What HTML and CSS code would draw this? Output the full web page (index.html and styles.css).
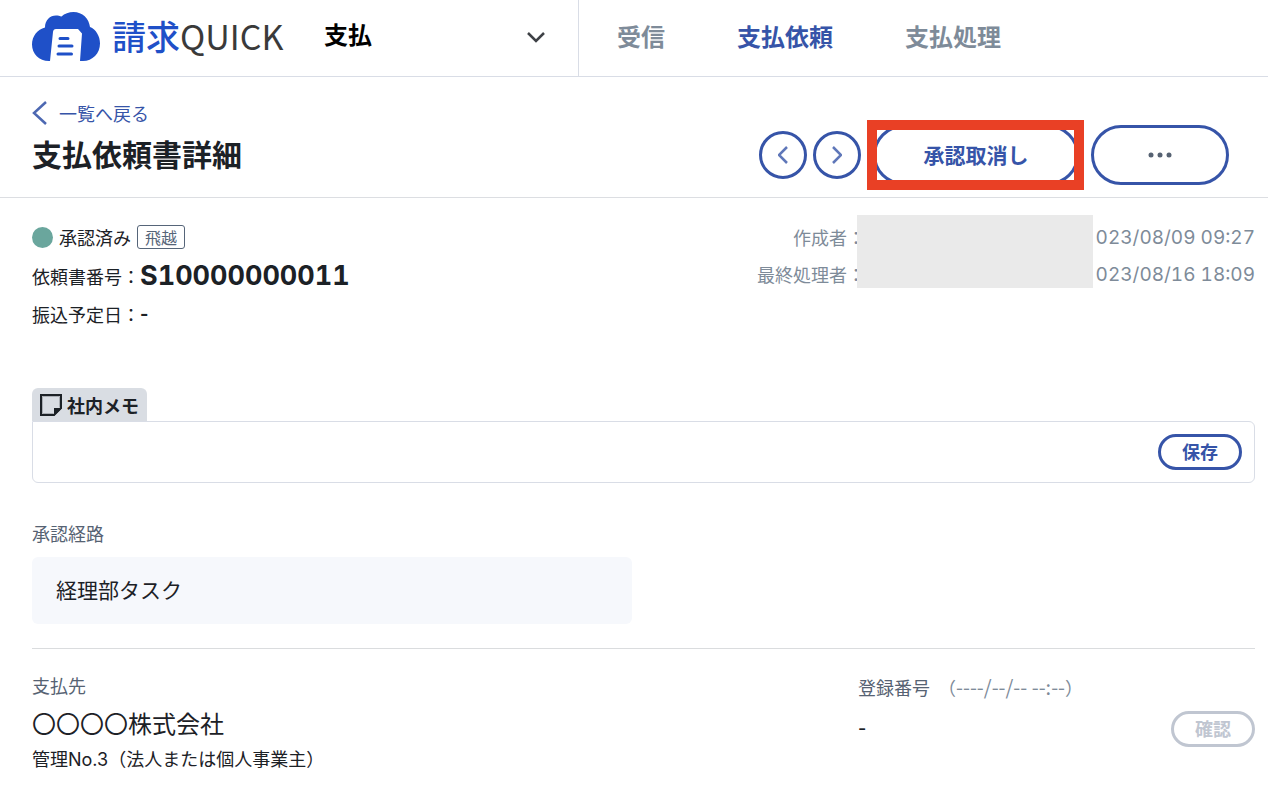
FILE: index.html
```html
<!DOCTYPE html>
<html lang="ja">
<head>
    <meta charset="UTF-8">
    <meta name="viewport" content="width=device-width, initial-scale=1.0">
    <title>支払依頼書詳細</title>
    <link rel="stylesheet" href="styles.css">
</head>
<body>
    <!-- Header -->
    <header class="header">
        <div class="header-left">
            <a href="#" class="logo">
                <svg class="logo-mark" viewBox="0 0 68 49" aria-hidden="true">
                    <path fill="#1f50c8" d="M17 49C7 49 0 41.500 0 32.500C0 24 5.500 17.500 13 15.500C13 8 18 3.500 24 3.500C26 3.500 28 4 29.500 4.500C32.500 1.500 37 0 41.500 0C50.500 0 57 6.500 58 15C64 17.500 68 24 68 31.500C68 41.500 60.500 49 51 49Z"/>
                    <path fill="#fff" d="M18 49L21 20Q21.300 17 24 17H46L50 21.500L48 49Z"/>
                    <path fill="none" stroke="#1f50c8" stroke-width="3" stroke-linecap="round" d="M28 26.500H36M27 34H40M26 42H39.500"/>
                </svg>
                <span class="logo-text"><span class="logo-kanji">請求</span>QUICK</span>
            </a>
            <div class="menu">
                <select class="menu-select" aria-label="メニュー">
                    <option>支払</option>
                </select>
                <svg class="menu-arrow" viewBox="0 0 20 12" aria-hidden="true">
                    <path d="M2 2L10 10L18 2"/>
                </svg>
            </div>
        </div>
        <nav class="nav">
            <a href="#" class="nav-link">受信</a>
            <a href="#" class="nav-link active">支払依頼</a>
            <a href="#" class="nav-link">支払処理</a>
        </nav>
    </header>

    <!-- Title bar -->
    <div class="title-bar">
        <div>
            <a href="#" class="back">
                <svg viewBox="0 0 15 24" aria-hidden="true"><path d="M14 1L2 12L14 23"/></svg>
                一覧へ戻る
            </a>
            <h1 class="title">支払依頼書詳細</h1>
        </div>
        <div class="actions">
            <div class="pager">
                <button class="round-button" aria-label="前へ">
                    <svg viewBox="0 0 10 18" aria-hidden="true"><path d="M9 1L1 9L9 17"/></svg>
                </button>
                <button class="round-button" aria-label="次へ">
                    <svg viewBox="0 0 10 18" aria-hidden="true"><path d="M1 1L9 9L1 17"/></svg>
                </button>
            </div>
            <div class="highlight">
                <button class="button button-large button-cancel">承認取消し</button>
            </div>
            <button class="button button-large button-more" aria-label="その他">
                <svg viewBox="0 0 24 6" aria-hidden="true">
                    <circle cx="3" cy="3" r="2.500"/><circle cx="12" cy="3" r="2.500"/><circle cx="21" cy="3" r="2.500"/>
                </svg>
            </button>
        </div>
    </div>

    <main class="content">
        <!-- Summary -->
        <section class="summary">
            <div class="summary-left">
                <p class="status"><span class="dot"></span>承認済み<span class="tag">飛越</span></p>
                <p class="summary-row">依頼書番号：<strong class="number">S10000000011</strong></p>
                <p class="summary-row">振込予定日：<strong>-</strong></p>
            </div>
            <div class="history">
                <p class="history-row"><span class="history-label">作成者：</span><span class="date">023/08/09 09:27</span></p>
                <p class="history-row"><span class="history-label">最終処理者：</span><span class="date">023/08/16 18:09</span></p>
                <div class="mask"></div>
            </div>
        </section>

        <!-- Memo -->
        <section class="memo">
            <label class="memo-tab" for="memo">
                <svg viewBox="0 0 22 22" aria-hidden="true">
                    <path fill="#d9dde3" stroke="#1c2126" stroke-width="2" d="M1 1H21V14L14 21H1Z"/>
                    <path fill="none" stroke="#a9adb3" d="M13.500 19.500H2.500V2.500H19.500V13.500"/>
                    <path fill="#1c2126" d="M14 14H22L14 22Z"/>
                </svg>
                社内メモ
            </label>
            <div class="memo-box">
                <textarea id="memo" class="memo-input" rows="1"></textarea>
                <button class="button button-small">保存</button>
            </div>
        </section>

        <!-- Approval route -->
        <section class="route">
            <h2 class="label">承認経路</h2>
            <div class="route-card">経理部タスク</div>
        </section>

        <!-- Payee -->
        <section class="payee">
            <div class="payee-main">
                <h2 class="label">支払先</h2>
                <p class="payee-name">〇〇〇〇株式会社</p>
                <p class="payee-note">管理No.3（法人または個人事業主）</p>
            </div>
            <div class="registration">
                <h2 class="label registration-label">登録番号 <span class="checked-at">（<span class="checked-date">----/--/-- --:--</span>）</span></h2>
                <div class="registration-row">
                    <span class="registration-number">-</span>
                    <button class="button button-small" disabled>確認</button>
                </div>
            </div>
        </section>
    </main>
</body>
</html>
```

FILE: styles.css
```css
* {
    margin: 0;
    padding: 0;
    box-sizing: border-box;
}

body {
    font-family: "Noto Sans CJK JP", sans-serif;
    font-size: 18px;
    line-height: 24px;
    color: #1c2126;
    background: #fff;
}

a {
    text-decoration: none;
}

svg {
    display: block;
    flex-shrink: 0;
}

button,
select,
textarea {
    font-family: inherit;
}

/* Header */
.header {
    display: flex;
    height: 77px;
    border-bottom: 1px solid #d9dde6;
}

.header-left {
    display: flex;
    align-items: center;
    width: 579px;
    padding: 0 32px 3px;
    border-right: 1px solid #d9dde6;
}

.logo {
    display: flex;
    align-items: center;
    gap: 12px;
    width: 292px;
    flex-shrink: 0;
}

.logo-mark {
    width: 68px;
    height: 49px;
}

.logo-text {
    padding-bottom: 2px;
    font-size: 34px;
    line-height: 40px;
    color: #3a3a3a;
    white-space: nowrap;
}

.logo-kanji {
    font-weight: 500;
    color: #1f50c8;
}

.menu {
    position: relative;
    flex: 1;
    padding-bottom: 6px;
}

.menu-select {
    appearance: none;
    width: 100%;
    border: none;
    background: none;
    font-size: 24px;
    font-weight: 700;
    line-height: 36px;
    color: #000;
}

.menu-arrow {
    position: absolute;
    right: 0;
    top: 15px;
    width: 20px;
    height: 12px;
    fill: none;
    stroke: #3e4146;
    stroke-width: 2.5;
    pointer-events: none;
}

.nav {
    display: flex;
    align-items: center;
    gap: 72px;
    padding: 0 38px 4px;
}

.nav-link {
    font-size: 24px;
    font-weight: 700;
    color: #7e8b99;
    white-space: nowrap;
}

.nav-link.active {
    color: #3654a8;
}

/* Title bar */
.title-bar {
    display: flex;
    justify-content: space-between;
    padding: 24px 39px 12px 32px;
    border-bottom: 1px solid #dcdee2;
}

.back {
    display: flex;
    align-items: center;
    gap: 12px;
    color: #3654a8;
}

.back svg {
    width: 15px;
    height: 24px;
    fill: none;
    stroke: #4d68b2;
    stroke-width: 2.5;
}

.title {
    margin-top: 8px;
    font-size: 30px;
    font-weight: 700;
    line-height: 40px;
}

.actions {
    display: flex;
    align-items: center;
    gap: 12px;
    height: 60px;
    margin-top: 24px;
}

.pager {
    display: flex;
    gap: 6px;
}

.round-button {
    display: flex;
    align-items: center;
    justify-content: center;
    width: 48px;
    height: 48px;
    border: 3px solid #3654a8;
    border-radius: 50%;
    background: #fff;
    cursor: pointer;
}

.round-button svg {
    width: 10px;
    height: 18px;
    fill: none;
    stroke: #5f77b9;
    stroke-width: 2.5;
}

.button {
    border: 3px solid #3654a8;
    border-radius: 30px;
    background: #fff;
    font-weight: 700;
    color: #3654a8;
    cursor: pointer;
}

.button:disabled {
    border-color: #c0c6d1;
    color: #c0c6d1;
    cursor: default;
}

.button-large {
    display: flex;
    align-items: center;
    justify-content: center;
    height: 60px;
    font-size: 21px;
}

.button-cancel {
    width: 206px;
    padding-bottom: 3px;
}

.button-more {
    width: 138px;
}

.button-more svg {
    width: 24px;
    height: 6px;
    fill: #566272;
}

.button-small {
    flex-shrink: 0;
    width: 84px;
    height: 36px;
    padding-bottom: 3px;
    font-size: 18px;
    line-height: 26px;
}

/* Frame laid over the cancel button */
.highlight {
    position: relative;
}

.highlight::after {
    content: "";
    position: absolute;
    inset: -5px -5px -5px -6px;
    border: 10px solid #e94025;
    pointer-events: none;
}

/* Content */
.content {
    padding: 24px 13px 24px 32px;
}

.summary {
    display: flex;
    justify-content: space-between;
}

.status {
    display: flex;
    align-items: center;
    gap: 6px;
    height: 30px;
    margin-bottom: 5px;
}

.dot {
    width: 21px;
    height: 21px;
    border-radius: 50%;
    background: #6aa69d;
}

.tag {
    padding: 0 7px;
    border: 1px solid #566579;
    border-radius: 3px;
    font-size: 16px;
    line-height: 22px;
    color: #566579;
}

.summary-row {
    display: flex;
    align-items: center;
    height: 38px;
}

.summary-row strong {
    font-family: Inter, sans-serif;
}

.summary-row .number {
    font-size: 27px;
    font-variant-numeric: tabular-nums;
}

.history {
    position: relative;
    width: 498px;
    color: #7e8b99;
}

.history-row {
    display: flex;
    justify-content: space-between;
    align-items: center;
    height: 37px;
    margin-top: -3px;
    margin-bottom: 3px;
}

.history-label {
    width: 108px;
    padding-bottom: 2px;
    text-align: right;
}

.date {
    font-family: Inter, sans-serif;
    font-size: 19px;
    font-variant-numeric: tabular-nums;
}

.mask {
    position: absolute;
    top: -7px;
    right: 162px;
    width: 236px;
    height: 73px;
    background: #eaeaea;
}

/* Memo */
.memo {
    margin-top: 55px;
}

.memo-tab {
    display: inline-flex;
    align-items: center;
    gap: 5px;
    height: 33px;
    padding: 0 8px;
    border-radius: 6px 6px 0 0;
    background: #d9dde3;
    font-weight: 700;
    vertical-align: top;
}

.memo-tab svg {
    width: 22px;
    height: 22px;
}

.memo-box {
    display: flex;
    align-items: center;
    padding: 12px;
    border: 1px solid #d9dde6;
    border-radius: 0 6px 6px 6px;
}

.memo-input {
    flex: 1;
    height: 36px;
    border: none;
    outline: none;
    resize: none;
    font-size: 18px;
}

/* Approval route */
.label {
    font-size: 18px;
    font-weight: 400;
    line-height: 24px;
    color: #566272;
}

.route {
    margin-top: 38px;
    padding-bottom: 24px;
    border-bottom: 1px solid #dadcde;
}

.route-card {
    max-width: 600px;
    margin-top: 12px;
    padding: 17px 24px 19px;
    border-radius: 6px;
    background: #f6f8fc;
    font-size: 21px;
    line-height: 31px;
}

/* Payee */
.payee {
    display: flex;
    justify-content: space-between;
    padding-top: 24px;
}

.payee-name {
    margin-top: 6px;
    font-size: 24px;
    line-height: 40px;
}

.payee-note {
    margin-top: 5px;
    font-family: Inter, "Noto Sans CJK JP", sans-serif;
}

.registration {
    width: 397px;
    padding-top: 2px;
}

.checked-at {
    margin-left: 4px;
    color: #7e8b99;
}

.checked-date {
    font-size: 20px;
}

.registration-row {
    display: flex;
    justify-content: space-between;
    align-items: center;
    margin-top: 12px;
}

.registration-number {
    font-family: Inter, sans-serif;
    font-weight: 500;
}
```
